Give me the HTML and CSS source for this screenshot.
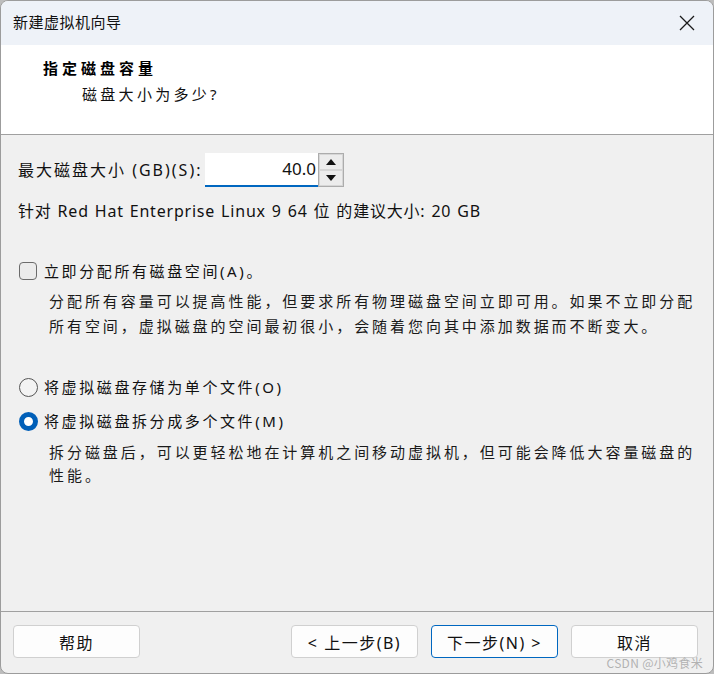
FILE: index.html
```html
<!DOCTYPE html>
<html lang="zh-CN">
<head>
<meta charset="utf-8">
<title>新建虚拟机向导</title>
<link rel="stylesheet" href="styles.css">
</head>
<body>
<div class="window">
  <div class="titlebar">
    <span class="title">新建虚拟机向导</span>
    <svg class="close" width="16" height="16" viewBox="0 0 16 16"><path d="M1 1 L15 15 M15 1 L1 15" stroke="#1a1a1a" stroke-width="1.3" fill="none"/></svg>
  </div>
  <div class="header">
    <div class="h-title">指定磁盘容量</div>
    <div class="h-sub">磁盘大小为多少?</div>
  </div>
  <div class="sep"></div>
  <div class="body">
    <div class="size-row">
      <label class="size-label">最大磁盘大小 (GB)(S):</label>
      <div class="input">40.0</div>
      <div class="spin">
        <div class="spin-btn"><svg width="10" height="6" viewBox="0 0 10 6"><path d="M0 6 L5 0 L10 6 Z" fill="#111"/></svg></div>
        <div class="spin-btn"><svg width="10" height="6" viewBox="0 0 10 6"><path d="M0 0 L5 6 L10 0 Z" fill="#111"/></svg></div>
      </div>
    </div>
    <div class="info">针对 Red Hat Enterprise Linux 9 64 位 的建议大小: 20 GB</div>
    <div class="check-row">
      <span class="checkbox"></span>
      <span class="opt-label">立即分配所有磁盘空间(A)。</span>
    </div>
    <div class="desc desc1">分配所有容量可以提高性能，但要求所有物理磁盘空间立即可用。如果不立即分配<br>所有空间，虚拟磁盘的空间最初很小，会随着您向其中添加数据而不断变大。</div>
    <div class="radio-row r1">
      <span class="radio"></span>
      <span class="opt-label">将虚拟磁盘存储为单个文件(O)</span>
    </div>
    <div class="radio-row r2">
      <span class="radio checked"></span>
      <span class="opt-label">将虚拟磁盘拆分成多个文件(M)</span>
    </div>
    <div class="desc desc2">拆分磁盘后，可以更轻松地在计算机之间移动虚拟机，但可能会降低大容量磁盘的<br>性能。</div>
  </div>
  <div class="sep"></div>
  <div class="footer">
    <button class="btn">帮助</button>
    <div class="spacer"></div>
    <button class="btn">&lt; 上一步(B)</button>
    <button class="btn primary">下一步(N) &gt;</button>
    <button class="btn">取消</button>
  </div>
  <div class="watermark">CSDN @小鸡食米</div>
</div>
</body>
</html>
```

FILE: styles.css
```css
* { box-sizing: border-box; }
html, body { margin: 0; padding: 0; background: #bdbdbd; }
body {
  width: 714px;
  height: 674px;
  font-family: "Noto Sans", "Noto Sans CJK SC", sans-serif;
  color: #111;
}
.window {
  position: relative;
  width: 714px;
  height: 674px;
  border: 1px solid #9c9c9c;
  border-radius: 8px;
  overflow: hidden;
  background: #f0f0f0;
  display: flex;
  flex-direction: column;
}
.titlebar {
  height: 44px;
  background: #eef2f8;
  display: flex;
  align-items: center;
  padding: 0 18px 3px 12px;
}
.title {
  font-size: 15px;
  letter-spacing: 0.5px;
  flex: 1;
  color: #111;
}
.close { display: block; margin-top: 3px; }
.header {
  height: 89px;
  background: #fff;
  padding: 0 0 0 42px;
}
.h-title {
  font-weight: bold;
  font-size: 15px;
  letter-spacing: 4px;
  margin-top: 11px;
  line-height: 24px;
  color: #000;
}
.h-sub {
  font-size: 15px;
  letter-spacing: 3.3px;
  padding-left: 39px;
  line-height: 24px;
  margin-top: 2px;
}
.sep {
  height: 1px;
  background: #a0a0a0;
}
.body {
  flex: 1;
  padding: 18px 18px 0 17px;
}
.size-row {
  display: flex;
  align-items: stretch;
  height: 34px;
}
.size-label {
  font-size: 16px;
  line-height: 34px;
  width: 187px;
  letter-spacing: 2px;
  white-space: nowrap;
}
.input {
  width: 113px;
  background: #fff;
  border-bottom: 2px solid #0067c0;
  text-align: right;
  font-size: 17px;
  line-height: 32px;
  padding-right: 2px;
}
.spin {
  width: 26px;
  border: 1px solid #acacac;
  display: flex;
  flex-direction: column;
  background: #e8e8e8;
}
.spin-btn {
  flex: 1;
  display: flex;
  align-items: center;
  justify-content: center;
  border: 1px solid #d6d6d6;
  background: #ececec;
}
.info {
  font-size: 16px;
  line-height: 20px;
  margin-top: 14px;
  letter-spacing: 0.8px;
  word-spacing: 1px;
}
.check-row, .radio-row {
  display: flex;
  align-items: center;
}
.check-row { margin-top: 40px; height: 20px; }
.checkbox {
  width: 18px;
  height: 18px;
  border: 1px solid #6b6b6b;
  border-radius: 4px;
  background: #ebebeb;
  margin-left: 1px;
  margin-right: 7px;
}
.opt-label {
  font-size: 15px;
  letter-spacing: 2.6px;
  line-height: 20px;
}
.desc {
  font-size: 15px;
  letter-spacing: 2.95px;
  padding-left: 31px;
  white-space: nowrap;
  color: #1a1a1a;
}
.desc1 { margin-top: 8px; line-height: 25px; }
.radio-row { height: 24px; }
.r1 { margin-top: 36px; }
.r2 { margin-top: 10px; }
.radio {
  width: 19px;
  height: 19px;
  border: 1px solid #555;
  border-radius: 50%;
  background: #f3f3f3;
  margin-left: 1px;
  margin-right: 6px;
  flex-shrink: 0;
}
.radio.checked {
  border: 5px solid #005fb8;
  background: #fff;
}
.desc2 { margin-top: 8px; line-height: 23px; }
.footer {
  height: 61px;
  display: flex;
  align-items: flex-start;
  padding: 13px 15px 0 12px;
  gap: 13px;
}
.spacer { flex: 1; }
.btn {
  width: 127px;
  height: 33px;
  background: #fdfdfd;
  border: 1px solid #d0d0d0;
  border-radius: 4px;
  font-family: "Noto Sans", "Noto Sans CJK SC", sans-serif;
  font-size: 16px;
  letter-spacing: 1.5px;
  color: #111;
  padding: 0;
}
.btn.primary {
  border: 1px solid #0067c0;
}
.watermark {
  position: absolute;
  right: 10px;
  bottom: 2px;
  font-size: 12px;
  letter-spacing: 0.3px;
  font-family: "Noto Sans CJK SC", sans-serif;
  color: rgba(170,170,170,0.9);
}
```
